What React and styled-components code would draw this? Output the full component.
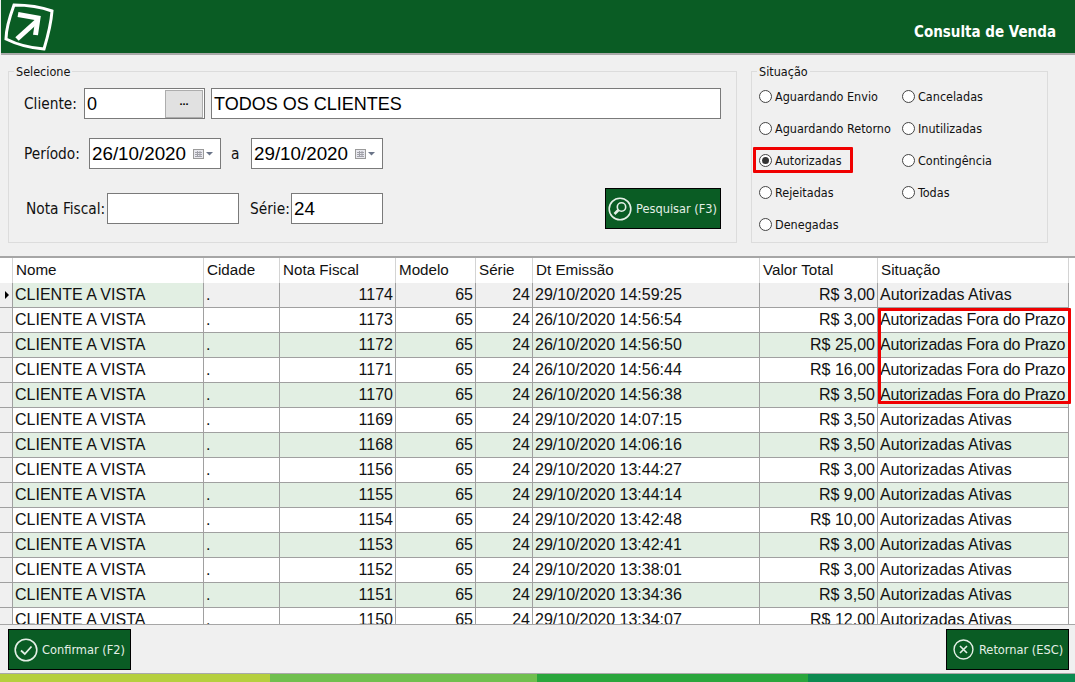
import React from 'react';
import styled, { createGlobalStyle } from 'styled-components';

const GlobalStyle = createGlobalStyle`
  html, body {
    margin: 0;
    height: 100%;
    background: #f0f0f0;
  }
  #root {
    height: 100%;
  }
`;

const FONT = '"DejaVu Sans Condensed", "DejaVu Sans", sans-serif';
const DATA_FONT = '"Liberation Sans", Arial, sans-serif';
const GREEN = '#0a5c24';
const COLUMNS = '13px 191px 76px 116px 80px 57px 227px 118px 191px';

const Page = styled.div`
  width: 1075px;
  height: 682px;
  display: flex;
  flex-direction: column;
  overflow: hidden;
  background: #f0f0f0;
  color: #111;
  font-family: ${FONT};
`;

const Header = styled.header`
  height: 53px;
  flex: none;
  display: flex;
  align-items: center;
  justify-content: space-between;
  padding: 0 19px 0 0;
  background: ${GREEN};
  border-bottom: 2px solid #a9a9a9;
  margin-left: 1px;
`;

const Title = styled.h1`
  margin: 10px 0 0;
  color: #fff;
  font-size: 15px;
  font-weight: bold;
`;

const Filters = styled.section`
  height: 201px;
  flex: none;
  display: flex;
  gap: 14px;
  padding: 8px 27px 0 8px;
  box-sizing: border-box;
`;

const Group = styled.fieldset`
  margin: 0;
  height: 180px;
  width: ${({ $w }) => $w}px;
  box-sizing: border-box;
  padding: 0;
  border: 1px solid #dcdcdc;
  position: relative;
  flex: none;
`;

const Legend = styled.legend`
  margin-left: 5px;
  padding: 0 2px;
  font-size: 12.5px;
  line-height: 16px;
  transform: translateY(1px);
`;

const Fields = styled.div`
  display: flex;
  flex-direction: column;
  padding: 9px 0 0 15px;
`;

const FieldRow = styled.div`
  display: flex;
  align-items: center;
  height: 31px;
  margin-bottom: ${({ $mb }) => $mb || 0}px;
  margin-left: ${({ $ml }) => $ml || 0}px;
`;

const Label = styled.label`
  flex: none;
  box-sizing: border-box;
  width: ${({ $w }) => $w}px;
  padding-left: ${({ $pl }) => $pl || 0}px;
  font-size: 15.3px;
  white-space: nowrap;
`;

const Box = styled.div`
  width: ${({ $w }) => $w}px;
  height: 31px;
  flex: none;
  box-sizing: border-box;
  display: flex;
  align-items: center;
  justify-content: space-between;
  border: 1px solid #7a7a7a;
  background: #fff;
  padding: 1px 0 0 2px;
  font-family: ${DATA_FONT};
  font-size: ${({ $size }) => $size || 18}px;
  color: #000;
  margin-left: ${({ $ml }) => $ml || 0}px;
  white-space: nowrap;
  overflow: hidden;
`;

const DotsButton = styled.span`
  width: 38px;
  height: 28px;
  margin: -1px 1px 0 0;
  padding-bottom: 6px;
  box-sizing: border-box;
  display: flex;
  align-items: center;
  justify-content: center;
  border: 1px solid #adadad;
  background: #e1e1e1;
  font-size: 11px;
  font-weight: bold;
`;

const ActionButton = styled.button`
  display: flex;
  align-items: center;
  gap: ${({ $gap }) => $gap || 4}px;
  box-sizing: border-box;
  width: ${({ $w }) => $w}px;
  height: 41px;
  padding: 0 0 0 ${({ $pad }) => $pad}px;
  background: ${GREEN};
  border: 1px solid #000;
  color: #e4efe6;
  font-family: ${FONT};
  font-size: 12.7px;
  white-space: nowrap;
`;

const SearchButton = styled(ActionButton)`
  position: absolute;
  top: 109px;
  left: 596px;
`;

const RadioGrid = styled.div`
  display: grid;
  grid-template-columns: 143px 1fr;
  grid-auto-flow: column;
  grid-template-rows: repeat(5, 32px);
  padding: 1px 0 0 7px;
`;

const RadioItem = styled.div`
  display: flex;
  align-items: center;
  gap: 3px;
  height: 32px;
  font-size: 12.5px;
  position: relative;
  white-space: nowrap;
`;

const RadioMark = styled.span`
  width: 13px;
  height: 13px;
  box-sizing: border-box;
  flex: none;
  border-radius: 50%;
  border: 1px solid #444;
  background: #fff;
  display: flex;
  align-items: center;
  justify-content: center;
  &::after {
    content: '';
    display: ${({ $on }) => ($on ? 'block' : 'none')};
    width: 7px;
    height: 7px;
    border-radius: 50%;
    background: #333;
  }
`;

const Highlight = styled.span`
  position: absolute;
  box-sizing: border-box;
  border: 3px solid #f00000;
  border-radius: 1px;
  pointer-events: none;
`;

const RadioHighlight = styled(Highlight)`
  left: -6px;
  top: 3px;
  width: 100px;
  height: 26px;
`;

const GridWrap = styled.div`
  height: 369px;
  flex: none;
  overflow: hidden;
  position: relative;
  background: #fff;
  border-top: 2px solid #a6a6a6;
  box-sizing: border-box;
  border-bottom: 1px solid #a6a6a6;
`;

const Row = styled.div`
  display: grid;
  grid-template-columns: ${COLUMNS};
  width: 1069px;
  height: 25px;
  box-sizing: border-box;
  border-bottom: ${({ $head }) => ($head ? 'none' : '1px solid #a0a0a0')};
  font-family: ${DATA_FONT};
  font-size: 16px;
  line-height: 24px;
  color: #111;
  background: ${({ $bg }) => $bg};
`;

const HeadCell = styled.div`
  padding-left: 3px;
  border-right: 1px solid #d4d4d4;
  font-size: 15.2px;
  background: #fff;
  white-space: nowrap;
`;

const Cell = styled.div`
  padding: 0 2px;
  border-right: 1px solid #a0a0a0;
  text-align: ${({ $right }) => ($right ? 'right' : 'left')};
  letter-spacing: ${({ $tight }) => ($tight ? '-0.2px' : 'normal')};
  background: ${({ $bg }) => $bg || 'transparent'};
  white-space: nowrap;
  overflow: hidden;
`;

const Indicator = styled.div`
  background: #f0f0f0;
  border-right: 1px solid #a0a0a0;
  display: flex;
  align-items: center;
  padding-left: 5px;
  &::before {
    content: '';
    display: ${({ $on }) => ($on ? 'block' : 'none')};
    border-left: 4px solid #000;
    border-top: 4px solid transparent;
    border-bottom: 4px solid transparent;
  }
`;

const PrazoHighlight = styled(Highlight)`
  left: 878px;
  top: 50px;
  width: 193px;
  height: 96px;
`;

const Footer = styled.footer`
  flex: none;
  height: 48px;
  display: flex;
  align-items: flex-start;
  justify-content: space-between;
  padding: 4px 6px 0 8px;
  box-sizing: border-box;
`;

const Stripes = styled.div`
  flex: none;
  height: 9px;
  display: grid;
  grid-template-columns: 270px 267px 271px 1fr;
  border-top: 1px solid #a9a9a9;
  box-sizing: border-box;
`;

const Stripe = styled.div`
  background: ${({ $c }) => $c};
`;

function Logo() {
  return (
    <svg width="56" height="52" viewBox="0 0 56 52" fill="none">
      <path
        d="M13 4 C26 4 40 6 51 10 C50 24 46 38 43 48 C29 47 15 43 5 38 C5 27 9 15 13 4 Z"
        stroke="#fff"
        strokeWidth="3"
      />
      <path d="M16 38 L36 20" stroke="#fff" strokeWidth="5" />
      <path d="M17 13.5 L37 17 L34.5 34" stroke="#fff" strokeWidth="5" />
    </svg>
  );
}

function CalendarIcon() {
  return (
    <svg width="24" height="14" viewBox="0 0 24 14" style={{ marginRight: 4 }}>
      <rect x="1.5" y="2.5" width="10" height="9" fill="#e8e8ee" stroke="#9a9a9a" />
      <path d="M3 5.5h7M3 7.5h7M3 9.5h7M5.5 4v6M8 4v6" stroke="#a0a0a8" strokeWidth="1" />
      <path d="M14 5h7l-3.5 3.5z" fill="#6a7488" />
    </svg>
  );
}

function CircleIcon({ children, size = 24 }) {
  return (
    <svg width={size} height={size} viewBox="0 0 24 24" fill="none" stroke="#e4efe6" style={{ flex: 'none' }}>
      <circle cx="12" cy="12" r="10.8" strokeWidth="1.6" />
      {children}
    </svg>
  );
}

function Radio({ label, on, marked }) {
  return (
    <RadioItem>
      <RadioMark $on={on} />
      {label}
      {marked && <RadioHighlight />}
    </RadioItem>
  );
}

const RADIOS = [
  ['Aguardando Envio'],
  ['Aguardando Retorno'],
  ['Autorizadas', true],
  ['Rejeitadas'],
  ['Denegadas'],
  ['Canceladas'],
  ['Inutilizadas'],
  ['Contingência'],
  ['Todas'],
];

const HEADERS = ['Nome', 'Cidade', 'Nota Fiscal', 'Modelo', 'Série', 'Dt Emissão', 'Valor Total', 'Situação'];

const ATIVAS = 'Autorizadas Ativas';
const FORA = 'Autorizadas Fora do Prazo';

const VENDAS = [
  [1174, '29/10/2020 14:59:25', '3,00', ATIVAS],
  [1173, '26/10/2020 14:56:54', '3,00', FORA],
  [1172, '26/10/2020 14:56:50', '25,00', FORA],
  [1171, '26/10/2020 14:56:44', '16,00', FORA],
  [1170, '26/10/2020 14:56:38', '3,50', FORA],
  [1169, '29/10/2020 14:07:15', '3,50', ATIVAS],
  [1168, '29/10/2020 14:06:16', '3,50', ATIVAS],
  [1156, '29/10/2020 13:44:27', '3,00', ATIVAS],
  [1155, '29/10/2020 13:44:14', '9,00', ATIVAS],
  [1154, '29/10/2020 13:42:48', '10,00', ATIVAS],
  [1153, '29/10/2020 13:42:41', '3,00', ATIVAS],
  [1152, '29/10/2020 13:38:01', '3,00', ATIVAS],
  [1151, '29/10/2020 13:34:36', '3,50', ATIVAS],
  [1150, '29/10/2020 13:34:07', '12,00', ATIVAS],
];

function rowColor(index) {
  if (index === 0) return '#f0f0f0';
  return index % 2 === 0 ? '#e2efe3' : '#fff';
}

export default function App() {
  return (
    <Page>
      <GlobalStyle />
      <Header>
        <Logo />
        <Title>Consulta de Venda</Title>
      </Header>

      <Filters>
        <Group $w={729}>
          <Legend>Selecione</Legend>
          <Fields>
            <FieldRow $mb={19}>
              <Label $w={60}>Cliente:</Label>
              <Box $w={121}>
                0
                <DotsButton>...</DotsButton>
              </Box>
              <Box $w={510} $ml={6}>TODOS OS CLIENTES</Box>
            </FieldRow>
            <FieldRow $mb={24}>
              <Label $w={65}>Período:</Label>
              <Box $w={132} $size={18.8}>
                26/10/2020
                <CalendarIcon />
              </Box>
              <Label $w={30} $pl={10}>a</Label>
              <Box $w={132} $size={18.8}>
                29/10/2020
                <CalendarIcon />
              </Box>
            </FieldRow>
            <FieldRow $ml={2}>
              <Label $w={81}>Nota Fiscal:</Label>
              <Box $w={132} />
              <Label $w={52} $pl={11}>Série:</Label>
              <Box $w={92} $size={18.8}>24</Box>
            </FieldRow>
          </Fields>
          <SearchButton $w={116} $pad={2}>
            <CircleIcon>
              <circle cx="13.5" cy="10" r="4.2" strokeWidth="1.6" />
              <path d="M10.4 13 L6.5 17" strokeWidth="2.6" />
            </CircleIcon>
            Pesquisar (F3)
          </SearchButton>
        </Group>

        <Group $w={297}>
          <Legend>Situação</Legend>
          <RadioGrid>
            {RADIOS.map(([label, on]) => (
              <Radio key={label} label={label} on={on} marked={on} />
            ))}
          </RadioGrid>
        </Group>
      </Filters>

      <GridWrap>
        <Row $head $bg="#fff">
          <HeadCell />
          {HEADERS.map((title) => (
            <HeadCell key={title}>{title}</HeadCell>
          ))}
        </Row>
        {VENDAS.map(([nota, emissao, valor, situacao], index) => (
          <Row key={nota} $bg={rowColor(index)}>
            <Indicator $on={index === 0} />
            <Cell $bg={index === 0 ? '#e2efe3' : undefined}>CLIENTE A VISTA</Cell>
            <Cell>.</Cell>
            <Cell $right>{nota}</Cell>
            <Cell $right>65</Cell>
            <Cell $right>24</Cell>
            <Cell>{emissao}</Cell>
            <Cell $right>R$ {valor}</Cell>
            <Cell $tight={situacao === FORA}>{situacao}</Cell>
          </Row>
        ))}
        <PrazoHighlight />
      </GridWrap>

      <Footer>
        <ActionButton $w={123} $pad={5}>
          <CircleIcon>
            <path d="M7 12.5 L10.8 16 L17.5 8.5" strokeWidth="1.8" />
          </CircleIcon>
          Confirmar (F2)
        </ActionButton>
        <ActionButton $w={123} $pad={6} $gap={5}>
          <CircleIcon size={21}>
            <path d="M8 8 L16 16 M16 8 L8 16" strokeWidth="1.9" />
          </CircleIcon>
          Retornar (ESC)
        </ActionButton>
      </Footer>

      <Stripes>
        <Stripe $c="#b5cf3e" />
        <Stripe $c="#70bf4e" />
        <Stripe $c="#2aa63c" />
        <Stripe $c="#0c8a50" />
      </Stripes>
    </Page>
  );
}
